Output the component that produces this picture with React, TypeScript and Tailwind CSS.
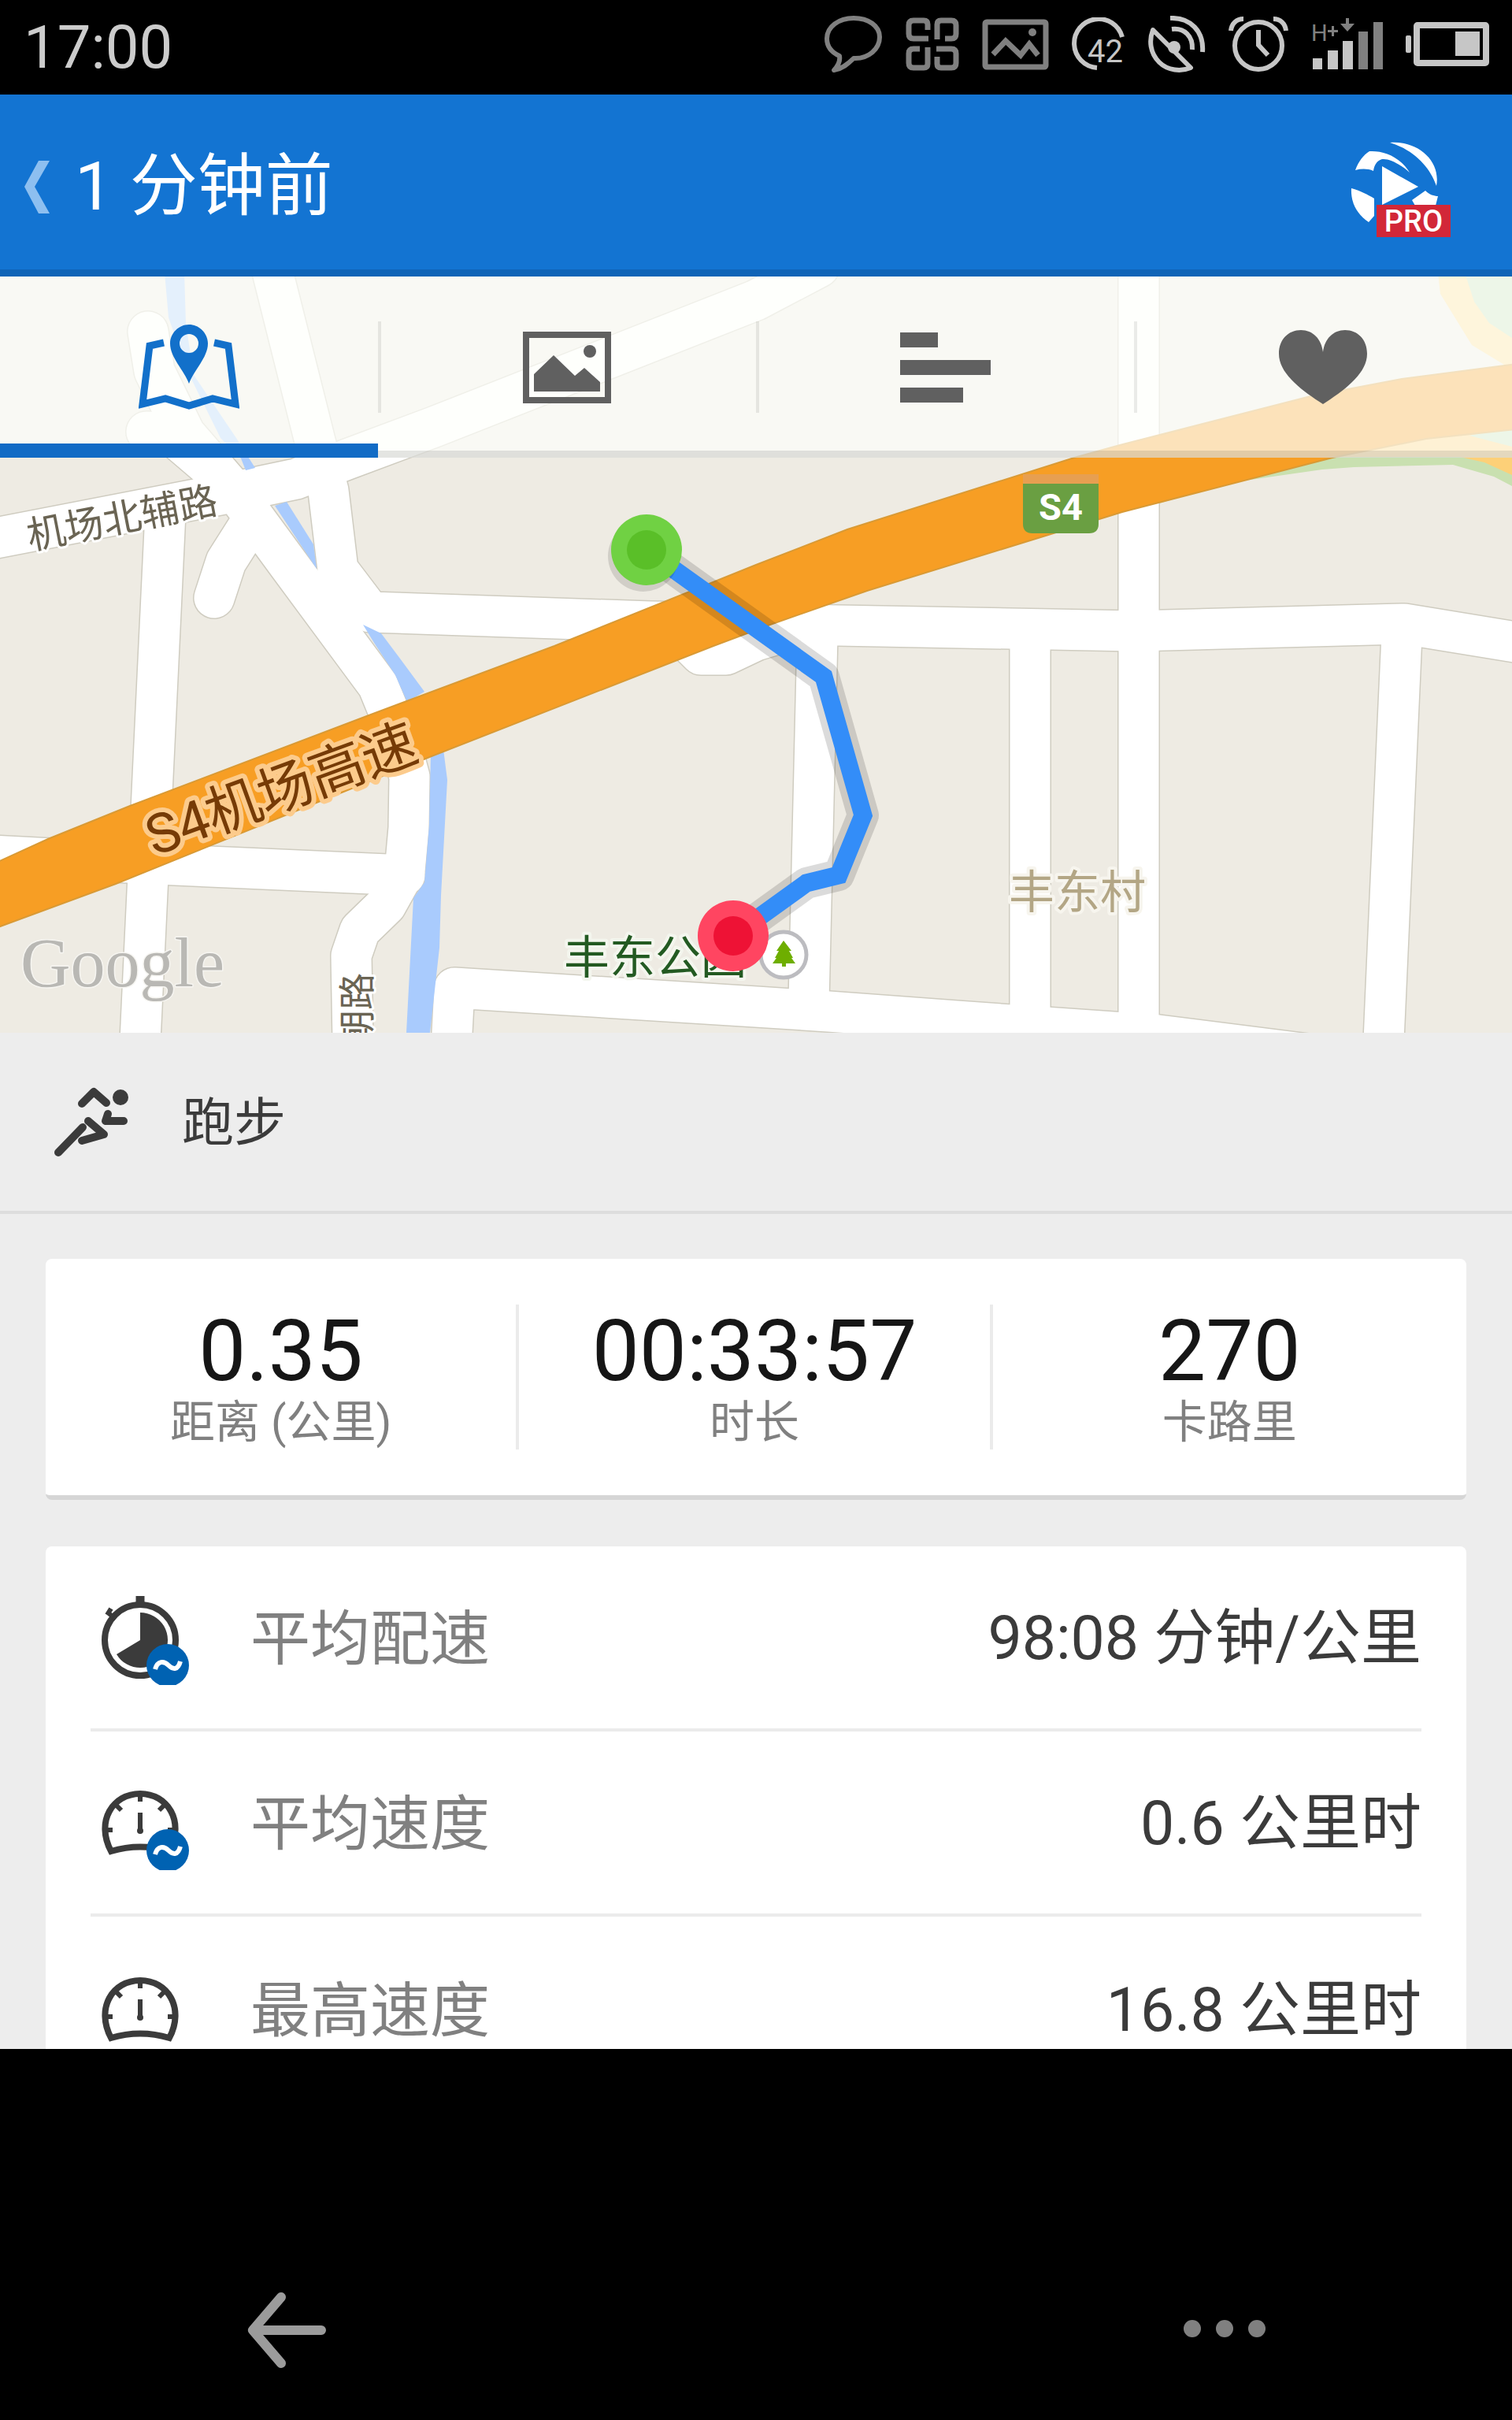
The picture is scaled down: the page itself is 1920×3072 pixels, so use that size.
const stats = [
  { value: "0.35", label: "距离 (公里)" },
  { value: "00:33:57", label: "时长" },
  { value: "270", label: "卡路里" },
];

const details = [
  { icon: "pace", average: true, label: "平均配速", value: "98:08 分钟/公里" },
  { icon: "speed", average: true, label: "平均速度", value: "0.6 公里时" },
  { icon: "speed", average: false, label: "最高速度", value: "16.8 公里时" },
];

// centre lines of the streets, all drawn twice: casing first, then the white fill
const streets = [
  "M210 300 L178 970",
  "M-10 333 L290 275 L376 257 L441 232 L551 191 L960 30 L1040 -12",
  "M345 -10 L400 209 L417 272 L429 372 L470 426 L826 438 L1064 443 L1440 450 L1783 441 L1930 465",
  "M188 70 L196 120 L235 200 L300 275 L366 365 L443 469 L480 519 L505 580 L520 635 L519 700 L514 755 L490 798 L457 830 L446 862 L448 970",
  "M186 197 L215 198 L270 245",
  "M320 310 L287 362 L272 408",
  "M872 462 L890 480 L922 480 L960 462 L1000 450",
  "M1038 455 L1027 920",
  "M1308 460 V940",
  "M1446 -10 V955",
  "M1780 455 L1757 970",
  "M573 980 L577 903 L960 927 L1052 933 L1283 950 L1471 963 L1700 992",
  "M-10 735 L200 746 L514 760",
];

function RouteMap() {
  return (
    <svg viewBox="0 0 1920 960" className="block h-auto w-full bg-[#eeebe3]">
      <g fill="none" strokeLinecap="round" strokeLinejoin="round">
        {streets.map((d) => (
          <path key={d} d={d} stroke="#cfccc0" strokeWidth="54" />
        ))}
        {streets.map((d) => (
          <path key={d} d={d} stroke="#ffffff" strokeWidth="51" />
        ))}
      </g>

      {/* river */}
      <g fill="#a9cbfd">
        <path d="M209 -5 H234 L236 60 L246 125 L300 205 L324 243 L312 246 L306 231 L280 205 L238 120 L214 52 Z" />
        <path d="M349 291 L364 286 L398 340 L402 371 Z" />
        <path d="M461 442 L484 453 L508 485 L539 527 L517 540 L502 506 L475 465 Z" />
        <path d="M547 605 L563 600 L568 639 L560 786 L558 852 L546 960 H516 L525 789 L539 769 L545 696 Z" />
      </g>

      {/* park */}
      <path d="M1826 -5 L1829 22 L1869 87 L1920 118 V-5 Z" fill="#fddc95" />
      <path d="M1860 -5 L1872 32 L1891 59 L1920 78 V-5 Z" fill="#c6e2bb" />
      <path d="M1472 288 L1560 262 L1679 245 L1719 242 L1845 239 L1897 254 L1920 266 V190 L1692 225 L1472 280 Z" fill="#c9e0b0" />
      <path d="M1750 215 L1920 185 V252 L1885 236 L1854 229 H1692 Z" fill="#fdd078" />
      <path d="M1866 202 L1920 190 V216 Z" fill="#c6e2bb" />

      {/* expressway */}
      <path
        d="M-5 744 L61 714 L165 672 L471 556 L704 469 L960 366 L1076 321 L1364 230 L1422 214 L1664 152 L1780 130 L1925 111 V194 L1811 206 L1692 230 L1425 299 L1101 399 L978 442 L906 469 L548 609 L147 771 L-5 827 Z"
        fill="#f79e24"
        stroke="#d99a35"
        strokeWidth="2"
      />
      <path d="M1299 251 H1395 V264 H1299 Z" fill="#e79f51" />
      <path d="M1299 263 H1395 V314 Q1395 326 1383 326 H1311 Q1299 326 1299 314 Z" fill="#6a9f42" />
      <text x="1347" y="309" textAnchor="middle" fontSize="47" fontWeight="700" fill="#ffffff">S4</text>

      <g paintOrder="stroke" strokeLinejoin="round">
        <text transform="translate(38 347) rotate(-11)" fontSize="49" fill="#6a6453" stroke="#ffffff" strokeWidth="6">机场北辅路</text>
        <text transform="translate(196 736) rotate(-20)" fontSize="70" fill="#763b06" stroke="#fccb8c" strokeWidth="12">S4机场高速</text>
        <text transform="translate(470 884) rotate(-90)" textAnchor="end" fontSize="47" fill="#6a6453" stroke="#ffffff" strokeWidth="6">朝路</text>
        <text x="716" y="885" fontSize="58" fill="#235a22" stroke="#f4f6ee" strokeWidth="8">丰东公园</text>
        <text x="1281" y="802" fontSize="58" fill="#b3a685" stroke="#f7f5ee" strokeWidth="8">丰东村</text>
        <text
          x="26"
          y="901"
          fontSize="88"
          fill="#b9b8b4"
          stroke="#f6f5f1"
          strokeWidth="3"
          className="font-['Liberation_Serif',serif]"
        >
          Google
        </text>
      </g>

      <circle cx="995" cy="861" r="29" fill="#ffffff" stroke="#bcbcc0" strokeWidth="5" />
      <path d="M995 843 L1005 856 H1002 L1007 865 H1005 L1010 872 H998 V876 H993 V872 H981 L986 865 H984 L989 856 H986 Z" fill="#6eae00" />

      {/* recorded track */}
      <g fill="none" strokeLinejoin="round">
        <path d="M821 347 L1046 508 L1096 684 L1065 760 L1024 770 L931 837" stroke="#000000" strokeOpacity="0.14" strokeWidth="40" />
        <path d="M821 347 L1046 508 L1096 684 L1065 760 L1024 770 L931 837" stroke="#338df8" strokeWidth="23" strokeLinejoin="miter" />
      </g>
      <circle cx="817" cy="355" r="45" fill="#000000" fillOpacity="0.12" />
      <circle cx="821" cy="347" r="45" fill="#70d143" />
      <circle cx="821" cy="347" r="25" fill="#5abf28" />
      <circle cx="931" cy="837" r="45" fill="#ff4561" />
      <circle cx="931" cy="837" r="25" fill="#ee1235" />
    </svg>
  );
}

function StatusIcons() {
  return (
    <div className="flex items-center gap-[29px] pb-2 text-[#c6c6c6]">
      <svg width="74" height="72" viewBox="0 0 74 72" fill="none" stroke="#808080" strokeWidth="6" strokeLinejoin="round">
        <path d="M19 51 C8 46 3 39 3 29 C3 14 18 3 37 3 C56 3 70 13 70 27 C70 42 56 55 37 54 C30 61 23 67 12 69 C18 63 20 57 19 51 Z" />
      </svg>
      <svg width="68" height="68" viewBox="0 0 68 68" fill="none" stroke="#808080" strokeWidth="7">
        <path d="M28 16 V9 Q28 4 23 4 H10 Q4 4 4 10 V21 Q4 27 10 27 H29" />
        <path d="M40 28 V9 Q40 4 45 4 H58 Q64 4 64 10 V21 Q64 27 58 27 H50" />
        <path d="M18 40 H10 Q4 40 4 46 V58 Q4 64 10 64 H23 Q28 64 28 59 V38" />
        <path d="M39 40 H58 Q64 40 64 46 V58 Q64 64 58 64 H45 Q40 64 40 59 V50" />
      </svg>
      <svg width="85" height="65" viewBox="0 0 85 65" fill="none" stroke="#808080" strokeWidth="7">
        <rect x="4" y="4" width="77" height="57" rx="2" />
        <path d="M14 45 L30 28 L49 46 L60 32 L71 46" />
        <circle cx="64" cy="17" r="5" fill="#808080" stroke="none" />
      </svg>
      <svg width="68" height="68" viewBox="0 0 68 68" fill="none" stroke="currentColor" strokeWidth="6">
        <path d="M64 25 A31 31 0 1 0 32 64" />
        <text x="20" y="57" fontSize="40" fill="currentColor" stroke="none">42</text>
      </svg>
      <svg width="73" height="72" viewBox="0 0 73 72" fill="none" stroke="currentColor" strokeWidth="6">
        <path d="M6 18 L54 66 C42 71 25 70 14 59 C2 47 1 31 6 18 Z" strokeLinejoin="round" />
        <circle cx="33" cy="40" r="8" fill="currentColor" stroke="none" />
        <path d="M30 17 C46 15 57 26 56 43" />
        <path d="M28 3 C54 2 71 20 69 46" />
      </svg>
      <svg width="76" height="70" viewBox="0 0 76 70" fill="none" stroke="currentColor" strokeWidth="6">
        <circle cx="38" cy="37" r="30" />
        <path d="M38 17 V36 L50 49" />
        <path d="M3 18 C4 9 10 3 19 3 M57 3 C66 3 72 9 73 18" />
      </svg>
      <svg width="91" height="66" viewBox="0 0 91 66" fill="currentColor">
        <text x="0" y="29" fontSize="29" fill="#808080">H</text>
        <path d="M21 15 H26 V10 H29 V15 H34 V18 H29 V23 H26 V18 H21 Z" fill="#808080" />
        <path d="M44 0 H48 V7 H55 L46 17 L37 7 H44 Z" fill="#808080" />
        <path d="M2 51 H14 V65 H2 Z M21 41 H34 V65 H21 Z M40 29 H53 V65 H40 Z" />
        <path d="M60 17 H72 V65 H60 Z M79 5 H91 V65 H79 Z" fill="#808080" />
      </svg>
      <svg width="106" height="56" viewBox="0 0 106 56" fill="currentColor">
        <rect x="0" y="17" width="7" height="22" rx="2" />
        <rect x="14" y="4" width="88" height="48" rx="1" fill="none" stroke="currentColor" strokeWidth="8" />
        <rect x="63" y="12" width="31" height="31" />
      </svg>
    </div>
  );
}

function ProLogo() {
  return (
    <svg width="127" height="130" viewBox="0 -8 127 130" fill="#ffffff">
      <path d="M50 1 C85 -2 115 24 109 56 C101 32 80 10 50 1 Z" />
      <path d="M6 36 C10 25 16 17 24 12 C42 11 63 19 75 39 C60 26 48 21 40 22 C33 24 30 30 29 37 C22 34 14 34 6 36 Z" />
      <path d="M40 31 L86 57 L40 80 Z" />
      <path d="M1 59 C10 61 22 67 30 72 V94 L23 102 C8 92 0 77 1 59 Z" />
      <path d="M95 62 C100 67 106 69 111 69 L108 81 H82 L78 74 Z" />
      <rect x="33" y="80" width="94" height="41" fill="#d22738" />
      <text x="80" y="114" textAnchor="middle" fontSize="38" fontWeight="500">PRO</text>
    </svg>
  );
}

function DetailIcon({ icon, average }: { icon: string; average: boolean }) {
  return (
    <svg width="112" height="120" viewBox="0 0 112 120" fill="none" stroke="#3b3b3b" strokeWidth="8">
      {icon === "pace" ? (
        <>
          <circle cx="49" cy="63" r="45" />
          <path d="M49 7 V18" strokeWidth="11" />
          <path d="M9 29 L18 36 M12 23 L7 31" strokeWidth="6" />
          <path d="M49 63 V28 A35 35 0 1 1 19 81 Z" fill="#3b3b3b" stroke="none" />
        </>
      ) : (
        <>
          <path d="M12 96 C-8 58 14 23 49 23 C84 23 106 58 86 96 Q49 85 12 96 Z" />
          <path d="M49 24 V33 M6 69 H14 M84 69 H92 M19 38 L25 44 M79 38 L73 44" strokeWidth="6" />
          <path d="M49 47 V70" strokeWidth="6" />
          <circle cx="49" cy="70" r="4" fill="#3b3b3b" stroke="none" />
        </>
      )}
      {average && (
        <>
          <circle cx="84" cy="95" r="27" fill="#0062b2" stroke="none" />
          <path d="M68 100 C71 89 79 89 85 95 C91 101 97 101 100 90" stroke="#ffffff" strokeWidth="6" />
        </>
      )}
    </svg>
  );
}

export default function App() {
  return (
    <div className="flex h-screen flex-col overflow-hidden bg-black font-['Roboto','Noto_Sans_CJK_SC',sans-serif]">
      <div className="flex h-[120px] shrink-0 items-center justify-between pr-[29px] pl-[30px]">
        <span className="text-[76px] leading-none text-[#cccccc]">17:00</span>
        <StatusIcons />
      </div>

      <header className="flex h-[231px] shrink-0 items-center justify-between border-b-[9px] border-[#0f64b7] bg-[#1374d2] pt-3 pr-[78px] pl-[31px]">
        <a href="#" className="flex items-center gap-8 text-white">
          <svg width="32" height="67" viewBox="0 0 32 67" fill="#8dbff0">
            <path d="M18 0 H32 L13 33 L32 67 H18 L0 33 Z" />
          </svg>
          <h1 className="text-[86px] leading-none">1 分钟前</h1>
        </a>
        <button type="button" aria-label="PRO">
          <ProLogo />
        </button>
      </header>

      <main className="min-h-0 flex-1 overflow-hidden bg-[#ededed]">
        <section className="relative">
          <RouteMap />
          <nav className="absolute inset-x-0 top-0 grid h-[230px] grid-cols-4 bg-[#fefffb]/70">
            <button type="button" aria-label="地图" className="flex items-center justify-center border-b-[18px] border-[#116bc5] pt-[18px]">
              <svg width="128" height="108" viewBox="0 0 128 108" fill="none" stroke="#1270ca" strokeWidth="9">
                <path d="M32 23 L14 27 L5 101 L34 94 L64 103 L94 94 L123 101 L114 27 L96 23" />
                <path d="M64 0 C77 0 88 11 88 24 C88 42 70 58 64 75 C58 58 40 42 40 24 C40 11 51 0 64 0 Z M64 12 A12 12 0 1 0 64 36 A12 12 0 1 0 64 12 Z" fill="#1270ca" fillRule="evenodd" stroke="none" />
              </svg>
            </button>
            <button type="button" aria-label="照片" className="flex items-center justify-center border-b-[9px] border-black/10 pt-[9px]">
              <svg width="112" height="91" viewBox="0 0 112 91" fill="#606060">
                <rect x="4" y="4" width="104" height="83" fill="none" stroke="#606060" strokeWidth="8" />
                <circle cx="85" cy="25" r="8" />
                <path d="M14 76 V54 L39 30 L66 56 L78 46 L98 64 V76 Z" />
              </svg>
            </button>
            <button type="button" aria-label="分段" className="flex items-center justify-center border-b-[9px] border-black/10 pt-[9px]">
              <svg width="115" height="91" viewBox="0 0 115 91" fill="#606060">
                <path d="M0 1 H48 V20 H0 Z M0 36 H115 V55 H0 Z M0 71 H80 V90 H0 Z" />
              </svg>
            </button>
            <button type="button" aria-label="心率" className="flex items-center justify-center border-b-[9px] border-black/10 pt-[9px]">
              <svg width="112" height="94" viewBox="0 0 112 94" fill="#606060">
                <path d="M56 94 C28 76 0 55 0 30 C0 12 12 0 28 0 C43 0 54 11 56 28 C58 11 69 0 84 0 C100 0 112 12 112 30 C112 55 84 76 56 94 Z" />
              </svg>
            </button>
          </nav>
          <div className="pointer-events-none absolute inset-x-0 top-[57px] grid h-[116px] grid-cols-4">
            <span />
            <span className="border-l-4 border-black/8" />
            <span className="border-l-4 border-black/8" />
            <span className="border-l-4 border-black/8" />
          </div>
        </section>

        <section className="flex h-[230px] items-center gap-[66px] border-b-4 border-[#dddddd] pl-[69px]">
          <svg width="96" height="90" viewBox="0 0 96 90" fill="none" stroke="#3b3b3b" strokeWidth="10" strokeLinecap="round" strokeLinejoin="round">
            <circle cx="84" cy="14" r="10" fill="#3b3b3b" stroke="none" />
            <path d="M35 22 L50 7 L66 21" />
            <path d="M68 35 L65 44 H88" />
            <path d="M43 44 L63 61 L35 69" />
            <path d="M36 52 L5 84" />
          </svg>
          <h2 className="pt-1 text-[66px] leading-none text-[#3b3b3b]">跑步</h2>
        </section>

        <section className="mx-[58px] mt-[57px] grid grid-cols-3 divide-x-4 divide-[#ebebeb] rounded-lg border-b-6 border-[#d6d6d6] bg-white py-[58px]">
          {stats.map((stat) => (
            <div key={stat.label} className="flex h-[184px] flex-col items-center">
              <span className="text-[107px] leading-[120px] text-[#161616]">{stat.value}</span>
              <span className="text-[57px] leading-[60px] text-[#808080]">{stat.label}</span>
            </div>
          ))}
        </section>

        <dl className="mx-[58px] mt-[59px] divide-y-4 divide-[#ebebeb] rounded-t-lg bg-white px-[57px]">
          {details.map((row) => (
            <div key={row.label} className="flex h-[235px] items-center justify-between">
              <dt className="flex items-center gap-[77px] pl-[14px] text-[76px] leading-none text-[#808080]">
                <DetailIcon icon={row.icon} average={row.average} />
                <span className="pt-1">{row.label}</span>
              </dt>
              <dd className="pt-1 text-[77px] leading-none text-[#3b3b3b]">{row.value}</dd>
            </div>
          ))}
        </dl>
      </main>

      <footer className="flex h-[471px] shrink-0 items-end justify-between px-[313px] pb-[65px]">
        <button type="button" aria-label="返回">
          <svg width="102" height="98" viewBox="0 0 102 98" fill="none" stroke="#9b9b9b" strokeWidth="12" strokeLinecap="round" strokeLinejoin="round">
            <path d="M44 7 L8 49 L44 91 M8 49 H95" />
          </svg>
        </button>
        <button type="button" aria-label="更多">
          <svg width="104" height="98" viewBox="0 0 104 98" fill="#808080">
            <circle cx="11" cy="47" r="11" />
            <circle cx="52" cy="47" r="11" />
            <circle cx="93" cy="47" r="11" />
          </svg>
        </button>
      </footer>
    </div>
  );
}
